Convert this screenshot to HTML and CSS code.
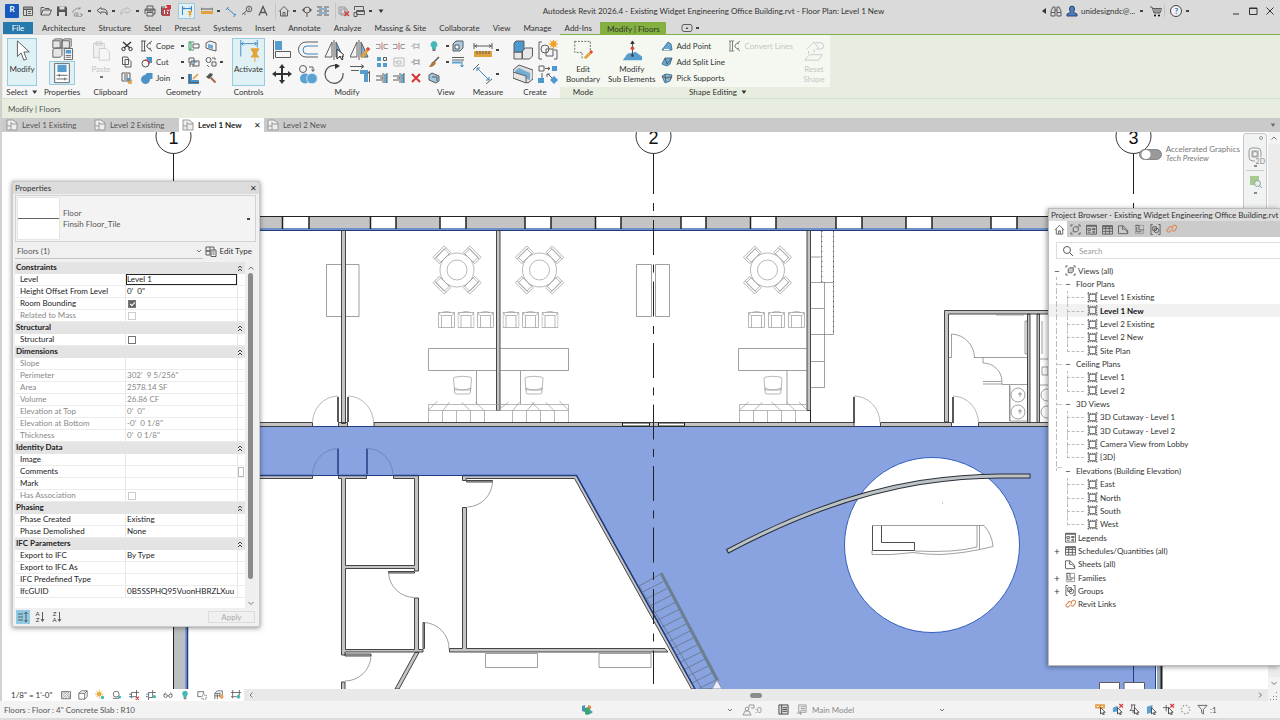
FILE: index.html
```html
<!DOCTYPE html>
<html lang="en">
<head>
<meta charset="utf-8">
<meta name="viewport" content="width=device-width, initial-scale=1">
<title>Autodesk Revit 2026.4</title>
<link rel="stylesheet" href="styles.css">
</head>
<body>
<svg class="sprite" aria-hidden="true">
  <symbol id="window" viewBox="0 0 12 12"><path class="k" d="M1.500 2h9v8.500h-9zM1.500 4.500h9M4.500 4.500v6M6 6.500h3M6 8.500h3"/><path class="k" d="M1.500 3h9"/></symbol>
  <symbol id="open" viewBox="0 0 12 12"><path class="k" d="M1 10V2.500h3l1 1h4V5M1 10l2-5h8.500L9.500 10z"/></symbol>
  <symbol id="save" viewBox="0 0 12 12"><path fill="#555" d="M1 1.500h9l1 1v8.500H1z"/><path fill="#ddd" d="M3.500 1.500h5v3h-5zM3 7h6v4H3z"/></symbol>
  <symbol id="sync" viewBox="0 0 12 12"><path class="k lt" d="M1 8a2 2 0 0 1 2-3 3 3 0 0 1 5-1M8 2v2H6M4 9a3 3 0 0 0 6 0M10 11V9H8M3 8h3v3H2z"/></symbol>
  <symbol id="undo" viewBox="0 0 12 12"><path class="k" d="M5 2.500L1 5.500l4 3V7h3q3 0 3 3 1-5-3-6H5z"/></symbol>
  <symbol id="redo" viewBox="0 0 12 12"><path class="k vl" d="M7 2.500l4 3-4 3V7H4q-3 0-3 3-1-5 3-6h3z"/></symbol>
  <symbol id="print" viewBox="0 0 12 12"><path class="k" d="M3 4V1h6v3M1 9V4h10v5H9M3 7.500h6V11H3zM3 6h6"/><path fill="#777" d="M1 4h10v2H1z"/></symbol>
  <symbol id="pdf" viewBox="0 0 12 12"><path fill="#b74b50" d="M2 3h8v8H2z"/><path fill="#eee" d="M4 5h1v4H4zM7 5h2v1H7zM7 7h1v2H7z"/><path fill="#d53338" d="M6 0h5v4H8z"/><path class="k" d="M1 2h4M1.500 2v8"/></symbol>
  <symbol id="temp" viewBox="0 0 12 12"><path class="k b" d="M1.500 1v9M10.500 1v5M1.500 3.500h9M3 2.500l-1 1 1 1M9 2.500l1 1-1 1"/><path fill="#e3a336" d="M7 6h4v1l-1 1v1l1 1H9.500V12h-1v-2H7l1-1V8L7 7z"/></symbol>
  <symbol id="ruler" viewBox="0 0 12 12"><path fill="#dfa13c" d="M0 6h12v3H0z"/><path class="k" d="M0 4h12M0 2.500v3M12 2.500v3"/></symbol>
  <symbol id="dim" viewBox="0 0 12 12"><path class="k b" d="M2 3l8 7M1 5l2.500-3M8.500 12l2.500-3"/></symbol>
  <symbol id="tag" viewBox="0 0 12 12"><circle class="k" cx="8" cy="4" r="2.800"/><path class="k" d="M5.500 6L1 9.500M4 10V8.500M8 2.500v3"/></symbol>
  <symbol id="text" viewBox="0 0 12 12"><path fill="none" stroke="#555" stroke-width="1.300" d="M2 10.500L6 1.500l4 9M3.500 7.500h5"/></symbol>
  <symbol id="home" viewBox="0 0 12 12"><path class="k" d="M1 6.500L6 1.500l5 5M2.500 5.500V11h7V5.500M5 11V7.500h2V11"/></symbol>
  <symbol id="section" viewBox="0 0 12 12"><circle class="k" cx="6" cy="5" r="3"/><path fill="#555" d="M1 5l2-2v4zM11 5L9 3v4zM5.500 8h1v4h-1z"/></symbol>
  <symbol id="thin" viewBox="0 0 12 12"><path class="k" d="M0 2h5M7 2h5M0 6h5M7 6h5M0 10h5M7 10h5"/><path class="k b" d="M2 4h8M2 8h8"/></symbol>
  <symbol id="closewin" viewBox="0 0 12 12"><path class="k lt" d="M1 2h6v7H1zM3 4h6v6H3z"/><path class="k r" d="M6.500 6.500l4.500 4.500M11 6.500L6.500 11"/></symbol>
  <symbol id="switch" viewBox="0 0 12 12"><path class="k" d="M1.500 5V1.500h9V5M3.500 5.500h8v4h-8zM1 7.500h3v4H1zM3.500 6.500h8"/></symbol>
  <symbol id="binoc" viewBox="0 0 12 12"><path class="k" d="M1 11V6l2-4h2v9zM7 11V2h2l2 4v5zM5 5h2M1 7.500h4M7 7.500h4"/></symbol>
  <symbol id="user" viewBox="0 0 12 12"><path fill="#527bbb" stroke="#26466f" d="M3.500 4a2.500 3 0 1 1 5 0c0 2-1 2.500-1 3.500L11 9v2H1V9l3.500-1.500c0-1-1-1.500-1-3.500z"/></symbol>
  <symbol id="cart" viewBox="0 0 12 12"><path class="k" d="M0 2h2l2 6h6l1.500-4.500H3M5 3.500V8M7 3.500V8M9 3.500V8"/><circle cx="5" cy="10.500" r="1"/><circle cx="9" cy="10.500" r="1"/></symbol>
  <symbol id="views" viewBox="0 0 12 12"><path class="k" d="M1 3V1h2M9 1h2v2M11 9v2H9M3 11H1V9"/><path fill="#ccc" class="k" d="M3.500 4.500l1.500-1.500h4v4L7.500 8.500h-4z"/></symbol>
  <symbol id="legend" viewBox="0 0 12 12"><path class="k" d="M.5 1.500h11v9.500H.5zM2 5h3v2H2zM7 5h3v1H7zM2 9h3M7 8h3M7 9.500h3"/><path fill="#666" d="M.5 1h11v2H.5z"/></symbol>
  <symbol id="table" viewBox="0 0 12 12"><path class="k" d="M.5 2h11v9H.5zM.5 5h11M.5 8h11M4 2v9M8 2v9"/><path fill="#666" d="M.5 1.500h11v2H.5z"/></symbol>
  <symbol id="sheet" viewBox="0 0 12 12"><path class="k" d="M.5 10V2h5l5 5v3.500h-10M5.500 2l-1 3.500 3 .5M8 6l3 4"/></symbol>
  <symbol id="family" viewBox="0 0 12 12"><path class="k lt" d="M1.500 1.500h9v9h-9z"/><path class="k" d="M5.500 1.500v5h5M1.500 1.500h4M3 3v5.500h5"/></symbol>
  <symbol id="group" viewBox="0 0 12 12"><path class="k" d="M3 .5H1v11h2M9 .5h2v11H9M3 3h4v4H3z"/><circle class="k" cx="7" cy="7" r="2.500"/></symbol>
  <symbol id="link" viewBox="0 0 12 12"><path fill="none" stroke="#dc8b5b" stroke-width="1.200" d="M5 7l-1 1.500a2 2 0 0 1-3-2L3 4.500a2 2 0 0 1 4 1M6 6a2 2 0 0 0 3.500 1L11 5a2 2 0 0 0-3-3L6.500 3.500"/></symbol>
  <symbol id="plan" viewBox="0 0 12 12"><path class="k" d="M2.500 2.500h7v7h-7z"/><path class="k" stroke-dasharray="1.500 1" d="M.5 1.500h11M.5 10.500h11M1.500 0v12M10.500 0v12"/></symbol>
  <symbol id="doc" viewBox="0 0 12 12"><path class="k lt" fill="#eee" d="M1 1h6l4 3v7H1zM1 7h4v4M5 5h6M5 3v4"/></symbol>
  <symbol id="cut" viewBox="0 0 12 12"><path fill="none" stroke="#333" stroke-width="1.400" d="M2 2l7 6M10 2L3 8"/><circle fill="none" stroke="#333" cx="2.500" cy="9" r="1.700"/><circle fill="none" stroke="#333" cx="9.500" cy="9" r="1.700"/></symbol>
  <symbol id="copy" viewBox="0 0 12 12"><path class="k" d="M1.500 1h5l1 2v5.500h-6zM4 3.500h4l2 2V11H4z"/></symbol>
  <symbol id="match" viewBox="0 0 12 12"><path class="k" d="M1 1h8v8H1zM3 3h4M3 5h4M3 7h3"/><path fill="#4c93ca" d="M6 6h3v3H6z"/><path class="k o" d="M7 11l4-3M8 11l3 0"/></symbol>
  <symbol id="cope" viewBox="0 0 12 12"><path class="k" d="M1 1v10M3.500 1v10M0 1h5M0 11h5M11 1L6 5v2l5 4M8 3l2 1M8 9l2-1"/></symbol>
  <symbol id="cutg" viewBox="0 0 12 12"><path fill="#4c93ca" d="M5 1h6v6H8z"/><circle fill="#f5f5f5" stroke="#555" cx="4.500" cy="7.500" r="3.500"/><path class="k r" d="M4 4a4 4 0 0 1 4 4"/></symbol>
  <symbol id="join" viewBox="0 0 12 12"><path fill="#4c93ca" d="M6 1h5.500v6H9a4.500 4.500 0 1 1-5-4z"/></symbol>
  <symbol id="geoA" viewBox="0 0 12 12"><path class="k g" d="M6 2H1v8h5M1 2l2 1v6l-2 1"/><path class="k" d="M5 4h6v4H5z"/></symbol>
  <symbol id="geoB" viewBox="0 0 12 12"><path class="k" d="M1 3l4-2 6 2v8l-4-1-6-2z"/><path fill="#70acd6" d="M3 4l5 1v4L3 8z"/></symbol>
  <symbol id="geoC" viewBox="0 0 12 12"><path class="k" d="M1 2h5v3H3v2H1zM6 5h5v5H6zM2 11V8h3v3"/><path class="k b" d="M3 6h6"/></symbol>
  <symbol id="geoD" viewBox="0 0 12 12"><circle class="k" cx="3.500" cy="4" r="2.500"/><path class="k" d="M7 6h4v4H7zM2 9l2 2M7 2h3v2"/></symbol>
  <symbol id="geoE" viewBox="0 0 12 12"><path fill="#4c93ca" d="M0 2h4v6h7v4H0z"/><path class="k" d="M1.500 2v8.500H11"/><path class="k o" d="M5 7l5-5"/></symbol>
  <symbol id="hammer" viewBox="0 0 12 12"><path fill="#555" d="M1 5l4-4 3 1-1 2-3 3z"/><path fill="none" stroke="#a86545" stroke-width="2" d="M5.500 5.500l5 5"/></symbol>
  <symbol id="align" viewBox="0 0 20 20"><path fill="#579ccf" d="M3 1h7v9H3z"/><path class="k" d="M1.500 0v19"/><path fill="#f7f7f7" class="k" d="M3.500 11.500h15v6h-15z"/></symbol>
  <symbol id="offset" viewBox="0 0 20 20"><path class="k" d="M20 2H8a7.500 7.500 0 0 0 0 15h12"/><path class="k b" d="M20 6H9a4 4 0 0 0 0 8h11"/></symbol>
  <symbol id="mirrorA" viewBox="0 0 20 20"><path class="k" d="M8 2v15H1zM10 0v20"/><path fill="#78b1d7" class="k" d="M12 2v15h7z"/><path fill="#fff" stroke="#333" d="M13 9v10l3-3 2 4 1-1-1-3h3z"/></symbol>
  <symbol id="mirrorB" viewBox="0 0 20 20"><path class="k" d="M7 2v15H0zM9 0v20"/><path fill="#78b1d7" class="k" d="M11 2v15h7z"/><path fill="none" stroke="#e5a23a" stroke-width="3" d="M19 8l-7 9"/><path stroke="#d44" stroke-width="3" d="M19 8l-2 2"/></symbol>
  <symbol id="move" viewBox="0 0 20 20"><path fill="#333" d="M10 0l3 4H7zM10 20l3-4H7zM0 10l4-3v6zM20 10l-4-3v6zM9 4h2v12H9zM4 9h12v2H4z"/></symbol>
  <symbol id="copyM" viewBox="0 0 20 20"><circle class="k" cx="5" cy="5" r="3.500"/><path class="k" d="M11 3h4v4M13.500 5.500L15 7.500l1.500-2"/><circle fill="#5aa2d3" cx="7" cy="14.500" r="5"/><circle fill="#5aa2d3" stroke="#d8e9f3" cx="14" cy="14.500" r="5.300"/></symbol>
  <symbol id="rotate" viewBox="0 0 20 20"><path fill="none" stroke="#555" stroke-width="1.200" d="M12 1.500A9 9 0 1 0 19 9"/><path fill="#333" d="M11-1l5 3-5 3z"/></symbol>
  <symbol id="trim" viewBox="0 0 20 20"><path fill="#579ccf" d="M10 6h8v12h-4v-8h-4z"/><path class="k" d="M0 2.500h13M1 6.500h8M11 .5l3 2-3 2M19.500 18V8M17.500 10l2-3 2 3"/></symbol>
  <symbol id="split" viewBox="0 0 12 12"><path class="k lt" d="M0 4.500h4v4H0M12 4.500H8v4h4"/><path stroke="#d8676a" d="M6 2.500v7.500"/></symbol>
  <symbol id="pin" viewBox="0 0 12 12"><path class="k lt" d="M1 6h3M4 3v6M4 4l5 1M4 8l5-1M9 3v6"/></symbol>
  <symbol id="array" viewBox="0 0 12 12"><path fill="#579ccf" d="M1 1h4v4H1zM7 7h4v4H7zM1 7h4v4H1z"/><path class="k" d="M7.500 1.500h3v3h-3z"/></symbol>
  <symbol id="scale" viewBox="0 0 12 12"><path class="k vl" d="M1 2h10v8H1zM4 5h4v3H4zM1 6h3"/></symbol>
  <symbol id="ext" viewBox="0 0 12 12"><path fill="#70a9cf" d="M8 2h3v9H8z"/><path class="k" d="M0 4h6M0 8h6M7 1v10M11 1v10M4 6h3"/></symbol>
  <symbol id="del" viewBox="0 0 12 12"><path fill="none" stroke="#d93438" stroke-width="2" d="M2 2l8 8M10 2l-8 8"/></symbol>
  <symbol id="bulb" viewBox="0 0 12 12"><path fill="#45b9b6" d="M6 1a3.500 3.500 0 0 1 2 6.300V9H4V7.300A3.500 3.500 0 0 1 6 1z"/><path fill="#777" d="M4.500 9h3v2h-3z"/></symbol>
  <symbol id="brush" viewBox="0 0 12 12"><path stroke="#555" stroke-width="1.500" d="M11 1L6 6"/><path fill="#b5763d" d="M6 5l2 2c-2 4-5 4-7 4 2-2 2-5 5-6z"/></symbol>
  <symbol id="box" viewBox="0 0 12 12"><path fill="#a9cde4" class="k" d="M1 4l3-3h7v7l-3 3H1z"/><path fill="#f7f7f7" class="k" d="M3 5h4v4H3z"/></symbol>
  <symbol id="lines" viewBox="0 0 12 12"><path class="k" d="M0 1.500h12M0 4h12" /><path stroke="#5aa2d3" stroke-width="2" d="M0 6.500h9"/><path class="k b" d="M10 5v6M8.500 9l1.500 2 1.500-2"/></symbol>
  <symbol id="slab" viewBox="0 0 12 12"><path fill="#9fc6de" class="k" d="M1 3l3-2 7 3v5l-3 2-7-3z"/><path class="k" d="M4 5h5v4"/></symbol>
  <symbol id="measure" viewBox="0 0 20 20"><path fill="#dfa13c" d="M1 11h18v6H1z"/><path class="k" d="M1 3v6M19 3v6M1 6h18M4 4.500L2 6l2 1.500M16 4.500L18 6l-2 1.500M4 11v3M7 11v3M10 11v3M13 11v3M16 11v3"/></symbol>
  <symbol id="aligned" viewBox="0 0 20 20"><path class="k b" d="M4 4l12 12M4 7V4h3M16 13v3h-3"/><path class="k" d="M0 6l6-6M13 20l6-5"/></symbol>
  <symbol id="assembly" viewBox="0 0 20 20"><path fill="#e8e8e8" class="k" d="M9.500 10l3-2h7v8l-3 3h-7zM1 12h8v7H1z"/><path fill="#4c99ce" class="k" d="M1 3l2-2h8v8L9 12H1z"/></symbol>
  <symbol id="newgroup" viewBox="0 0 20 20"><path class="k" d="M4 2H1v17h3M16 10h3v9h-3M8 9h7v7H8z"/><circle class="k" cx="7" cy="9" r="4"/><circle fill="#f1a329" cx="15.500" cy="4" r="3"/><path stroke="#f1a329" d="M15.500-1v10M10.500 4h10M12 .5l7 7M19 .5l-7 7"/></symbol>
  <symbol id="parts" viewBox="0 0 20 20"><path fill="#ddd" class="k" d="M0 6l6-5 14 5v9l-5 4L0 14z"/><path fill="#73add4" d="M2 7l4-3 11 5v7L2 11z"/><path fill="#e6e6e6" class="k" d="M0 8l13 4v7L0 14z"/></symbol>
  <symbol id="similar" viewBox="0 0 20 20"><path class="k" d="M1 2h5v5H1zM7 4.500h5M10 3l2 1.500-2 1.500M4 9v5M10 10l5 5M12 10h-3v3"/><path fill="#4c99ce" d="M14 2h5v5h-5zM0 14h6v5H0zM16 12l4 4-4 4-4-4z"/></symbol>
  <symbol id="addpt" viewBox="0 0 12 12"><path fill="#67a8d2" stroke="#477a9b" d="M1 10L7 2l3 2 1 6z"/><path fill="#fff" d="M3 9h5v1H3z"/></symbol>
  <symbol id="addln" viewBox="0 0 12 12"><path fill="#67a8d2" stroke="#477a9b" d="M1 8l3-6h7L9 8l-3 2z"/><path class="k" d="M4 2l2 6 5-6"/></symbol>
  <symbol id="pick" viewBox="0 0 12 12"><path fill="#8bbcd8" stroke="#477a9b" d="M1 4l4-2 6 1-2 6-5 2z"/><path class="k" d="M1 5l7 1M4 2l1 8M7 5h4l-2 3"/></symbol>
  <symbol id="sun" viewBox="0 0 12 12"><circle fill="#e8aa35" cx="5" cy="5" r="2.500"/><path stroke="#e8aa35" d="M5 0v10M0 5h10M1.500 1.500l7 7M8.500 1.500l-7 7"/><circle fill="#45b9b6" cx="9" cy="9" r="2"/></symbol>
  <symbol id="shadow" viewBox="0 0 12 12"><circle class="k" cx="5" cy="5" r="3.500"/><path class="k" d="M1 10h7"/><circle fill="#45b9b6" cx="9" cy="8.500" r="2"/></symbol>
  <symbol id="crop" viewBox="0 0 12 12"><path class="k" d="M3 10V3h9M0 5h3M9 0v8H1"/><path class="k b" d="M0 8h4"/><path class="k r" d="M8 8l4 4M12 8l-4 4"/></symbol>
  <symbol id="cropv" viewBox="0 0 12 12"><path class="k" d="M0 8h3V3h9M8 0v9H3v3"/><path class="k b" d="M0 5h4"/><circle fill="#45b9b6" cx="10" cy="8" r="2"/></symbol>
  <symbol id="glasses" viewBox="0 0 12 12"><circle class="k" cx="3" cy="7" r="2"/><circle class="k" cx="9" cy="7" r="2"/><path class="k" d="M1 6l2-3M11 6L9 3M5 7h2"/></symbol>
  <symbol id="hatch" viewBox="0 0 12 12"><path class="k" d="M.5 2h11v8.500H.5z"/><path stroke="#888" stroke-width=".7" d="M1 5l3-3M1 8l6-6M2 10l8-8M5 10l6-6M8 10l3-3M1 7l3 3M1 4l6 6M3 2l8 8M6 2l5 5"/></symbol>
  <symbol id="cube" viewBox="0 0 12 12"><path class="k" d="M1 4l3-3h7v7l-3 3H1zM1 4h7v7M8 4l3-3"/></symbol>
  <symbol id="tprops" viewBox="0 0 12 12"><path class="k" d="M1 2h7v3M1 2v6h4"/><path class="k" stroke-dasharray="1.500 1" d="M6 6h5v5H6z"/></symbol>
  <symbol id="analy" viewBox="0 0 12 12"><path class="k" d="M1 4l3-3h6v6M1 4v7M4 4v7M7 4v4M1 7h8M1 4h7"/><circle fill="#e8a158" cx="9" cy="8" r="2.500"/></symbol>
  <symbol id="constr" viewBox="0 0 12 12"><path class="k" d="M2 0v10M10 0v6M0 3h12M0 8h7"/><circle fill="#45b9b6" cx="9" cy="8" r="2.200"/></symbol>
  <symbol id="selcur" viewBox="0 0 12 12"><path fill="#fff" stroke="#444" d="M6 4v7l1.500-1.500L9 12l1-.5L9 9h2z"/></symbol>
  <symbol id="filter" viewBox="0 0 12 12"><path class="k" d="M1 1.500h10L7 6v5L5 9.500V6z"/></symbol>
  <symbol id="fold" viewBox="0 0 8 8"><path fill="none" stroke="#444" d="M2 4l2-2 2 2M2 7l2-2 2 2"/></symbol>
  <symbol id="down" viewBox="0 0 8 8"><path fill="none" stroke="#777" d="M2 3l2 2 2-2"/></symbol>
  <symbol id="chair" viewBox="0 0 17 17"><path class="d" d="M.5 1.500h16v15H.5zM3.500 4.500h10v12M3.500 4.500v12M1 1.500l1.500 3M16 1.500l-1.500 3M4 1.500q4.500-2.500 9 0"/></symbol>
</svg>

<header class="titlebar">
  <div class="quick" role="toolbar" aria-label="Quick access">
    <span class="logo">R</span>
    <button class="qi" aria-label="Home window"><svg><use href="#window"/></svg></button>
    <button class="qi s2" aria-label="Open"><svg><use href="#open"/></svg></button>
    <button class="qi" aria-label="Save"><svg><use href="#save"/></svg></button>
    <button class="qi" aria-label="Synchronize"><svg><use href="#sync"/></svg></button>
    <i class="caret"></i>
    <button class="qi s2" aria-label="Undo"><svg><use href="#undo"/></svg></button>
    <i class="caret"></i>
    <button class="qi s2" aria-label="Redo"><svg><use href="#redo"/></svg></button>
    <i class="caret"></i>
    <button class="qi s2" aria-label="Print"><svg><use href="#print"/></svg></button>
    <button class="qi" aria-label="Export PDF"><svg><use href="#pdf"/></svg></button>
    <button class="qi on s4" aria-label="Activate dimensions"><svg><use href="#temp"/></svg></button>
    <button class="qi s4" aria-label="Measure"><svg><use href="#ruler"/></svg></button>
    <i class="caret"></i>
    <button class="qi s2" aria-label="Aligned dimension"><svg><use href="#dim"/></svg></button>
    <button class="qi" aria-label="Tag"><svg><use href="#tag"/></svg></button>
    <button class="qi" aria-label="Text"><svg><use href="#text"/></svg></button>
    <button class="qi bar s4" aria-label="3D view"><svg><use href="#home"/></svg></button>
    <i class="caret"></i>
    <button class="qi s2" aria-label="Section"><svg><use href="#section"/></svg></button>
    <button class="qi" aria-label="Thin lines"><svg><use href="#thin"/></svg></button>
    <button class="qi bar s4" aria-label="Close inactive"><svg><use href="#closewin"/></svg></button>
    <button class="qi" aria-label="Switch windows"><svg><use href="#switch"/></svg></button>
    <i class="caret"></i>
    <i class="caret tri"></i>
  </div>
  <h1>Autodesk Revit 2026.4 - Existing Widget Engineering Office Building.rvt - Floor Plan: Level 1 New</h1>
  <div class="account">
    <i class="caret left"></i>
    <button class="qi" aria-label="Search"><svg><use href="#binoc"/></svg></button>
    <button class="user"><svg><use href="#user"/></svg>unidesigndc@...<i class="caret"></i></button>
    <button class="qi" aria-label="Store"><svg><use href="#cart"/></svg></button>
    <button class="help bar" aria-label="Help"><span>?</span></button>
    <i class="caret"></i>
    <button class="win first" aria-label="Minimize"><svg viewBox="0 0 10 10"><path d="M2 8h6"/></svg></button>
    <button class="win" aria-label="Maximize"><svg viewBox="0 0 10 10"><path d="M1.500 2h7.500v6.500H1.500zM1.500 2.500H9"/></svg></button>
    <button class="win" aria-label="Close"><svg viewBox="0 0 10 10"><path d="M1.500 1.500l7 7M8.500 1.500l-7 7"/></svg></button>
  </div>
</header>

<nav class="tabs" aria-label="Ribbon tabs">
  <button class="file">File</button>
  <button>Architecture</button><button>Structure</button><button>Steel</button><button>Precast</button><button>Systems</button><button>Insert</button><button>Annotate</button><button>Analyze</button><button>Massing &amp; Site</button><button>Collaborate</button><button>View</button><button>Manage</button><button>Add-Ins</button>
  <button class="current">Modify | Floors</button>
  <button class="mini" aria-label="Ribbon display"><svg viewBox="0 0 12 8"><path class="k" d="M3 .5h6a2 2 0 0 1 2 2v3a2 2 0 0 1-2 2H3a2 2 0 0 1-2-2v-3a2 2 0 0 1 2-2z"/><path fill="#444" d="M6 3l1.500 2h-3z"/></svg><i class="caret"></i></button>
</nav>

<div class="ribbon">
  <section class="panel w38">
    <div class="tools"><button class="big sel"><svg viewBox="0 0 24 24"><path fill="#fff" stroke="#555" d="M7 1v17l4-4 3 8 3-1-3-8h6z"/></svg>Modify</button></div>
    <h2>Select <i class="caret tri"></i></h2>
  </section>
  <section class="panel w42">
    <div class="tools stack">
      <button class="mid" aria-label="Type properties"><svg viewBox="0 0 24 24"><path fill="#e6e6e6" class="k" d="M2 3l2-2h8v8l-2 2H2zM12 3l2-2h8v8l-2 2h-8zM2 13l2-2h8v8l-2 2H2zM2 3h8v8M12 3h8v8"/><path fill="#fff" class="k" d="M14.500 11.500h9v12h-9z"/><path fill="#579ccf" d="M16 13h6v4h-6z"/><path class="k" d="M16 19h6M16 21h6"/></svg></button>
      <button class="mid sel" aria-label="Properties"><svg viewBox="0 0 24 24"><path fill="#fff" class="k" d="M4 1.500h16v21H4z"/><path fill="#579ccf" d="M7 3h10v8H7z"/><path class="k" d="M6 14.500h12M6 18.500h12M9 13v3M15 17v3"/></svg></button>
    </div>
    <h2>Properties</h2>
  </section>
  <section class="panel w55">
    <div class="tools clip">
      <button class="big off"><svg viewBox="0 0 24 24"><path fill="#eee" stroke="#b8b8b8" d="M3 3h13v17H3zM6 1h7v4H6z"/><path fill="#f7f7f7" stroke="#b8b8b8" d="M10 9h8l4 4v10H10z"/></svg>Paste<i class="caret"></i></button>
      <div class="col"><button class="sm" aria-label="Cut"><svg><use href="#cut"/></svg></button><button class="sm" aria-label="Copy"><svg><use href="#copy"/></svg></button><button class="sm" aria-label="Match type"><svg><use href="#match"/></svg></button></div>
    </div>
    <h2>Clipboard</h2>
  </section>
  <section class="panel w91">
    <div class="tools geo">
      <button class="row"><svg><use href="#cope"/></svg>Cope<i class="caret"></i></button><button class="sm" aria-label="Wall opening"><svg><use href="#geoA"/></svg></button><button class="sm" aria-label="Face"><svg><use href="#geoB"/></svg></button><i></i>
      <button class="row"><svg><use href="#cutg"/></svg>Cut<i class="caret"></i></button><button class="sm" aria-label="Beam joins"><svg><use href="#geoC"/></svg></button><button class="sm" aria-label="Wall joins"><svg><use href="#geoD"/></svg></button><i class="caret"></i>
      <button class="row"><svg><use href="#join"/></svg>Join<i class="caret"></i></button><button class="sm" aria-label="Paint"><svg><use href="#geoE"/></svg></button><button class="sm" aria-label="Demolish"><svg><use href="#hammer"/></svg></button><i></i>
    </div>
    <h2>Geometry</h2>
  </section>
  <section class="panel w39">
    <div class="tools"><button class="big sel"><svg viewBox="0 0 24 24"><path class="k b" d="M3 0v18M21 0v8M3 4h18M6 2L4 4l2 2M18 2l2 2-2 2"/><path fill="#e3a336" d="M14 9h9v2l-2 2v3l2 2v1h-4v5h-1v-5h-4v-1l2-2v-3l-2-2z"/></svg>Activate</button></div>
    <h2>Controls</h2>
  </section>
  <section class="panel w158">
    <div class="tools mod">
      <div class="g4">
        <button aria-label="Align"><svg><use href="#align"/></svg></button><button aria-label="Offset"><svg><use href="#offset"/></svg></button><button aria-label="Mirror pick axis"><svg><use href="#mirrorA"/></svg></button><button aria-label="Mirror draw axis"><svg><use href="#mirrorB"/></svg></button>
        <button aria-label="Move"><svg><use href="#move"/></svg></button><button aria-label="Copy elements"><svg><use href="#copyM"/></svg></button><button aria-label="Rotate"><svg><use href="#rotate"/></svg></button><button aria-label="Trim"><svg><use href="#trim"/></svg></button>
      </div>
      <div class="g3">
        <button class="sm" aria-label="Split"><svg><use href="#split"/></svg></button><button class="sm" aria-label="Split gap"><svg><use href="#split"/></svg></button><button class="sm off" aria-label="Unpin"><svg><use href="#pin"/></svg></button>
        <button class="sm" aria-label="Array"><svg><use href="#array"/></svg></button><button class="sm" aria-label="Scale"><svg><use href="#scale"/></svg></button><button class="sm" aria-label="Pin"><svg><use href="#pin"/></svg></button>
        <button class="sm" aria-label="Extend one"><svg><use href="#ext"/></svg></button><button class="sm" aria-label="Extend many"><svg><use href="#ext"/></svg></button><button class="sm" aria-label="Delete"><svg><use href="#del"/></svg></button>
      </div>
    </div>
    <h2>Modify</h2>
  </section>
  <section class="panel w40">
    <div class="tools view">
      <button class="sm" aria-label="Hide"><svg><use href="#bulb"/></svg></button><i class="caret"></i><button class="sm" aria-label="Selection box"><svg><use href="#box"/></svg></button>
      <button class="sm" aria-label="Override"><svg><use href="#brush"/></svg></button><i class="caret"></i><button class="sm" aria-label="Linework"><svg><use href="#lines"/></svg></button>
      <button class="sm" aria-label="Displace"><svg><use href="#slab"/></svg></button><i></i><i></i>
    </div>
    <h2>View</h2>
  </section>
  <section class="panel w44">
    <div class="tools pair">
      <button aria-label="Measure distance"><svg><use href="#measure"/></svg></button><i class="caret"></i>
      <button aria-label="Dimension"><svg><use href="#aligned"/></svg></button><i class="caret"></i>
    </div>
    <h2>Measure</h2>
  </section>
  <section class="panel w50">
    <div class="tools quad">
      <button aria-label="Create assembly"><svg><use href="#assembly"/></svg></button><button aria-label="Create group"><svg><use href="#newgroup"/></svg></button>
      <button aria-label="Create parts"><svg><use href="#parts"/></svg></button><button aria-label="Create similar"><svg><use href="#similar"/></svg></button>
    </div>
    <h2>Create</h2>
  </section>
  <section class="panel ctx w46">
    <div class="tools"><button class="big"><svg viewBox="0 0 24 24"><path class="k" stroke-dasharray="2 1.500" d="M3 1.500h17v14M3 1.500v12h8v8"/><path fill="none" stroke="#e5a23a" stroke-width="3" d="M21 13l-7 7"/><path stroke="#d44" stroke-width="3" d="M22 12l-2 2"/></svg>Edit<br>Boundary</button></div>
    <h2>Mode</h2>
  </section>
  <section class="panel ctx w224">
    <div class="tools shape">
      <button class="big"><svg viewBox="0 0 24 24"><path fill="#579ccf" d="M2 22l5-7 9-2 7 5v4z"/><path stroke="#444" d="M12.500 3v14M10.500 4l2-3 2 3"/><circle fill="#d44" cx="12.500" cy="9" r="2"/><circle fill="#444" cx="12.500" cy="17" r="1.500"/></svg>Modify<br>Sub Elements</button>
      <div class="col wide"><button class="row"><svg><use href="#addpt"/></svg>Add Point</button><button class="row"><svg><use href="#addln"/></svg>Add Split Line</button><button class="row"><svg><use href="#pick"/></svg>Pick Supports</button></div>
      <button class="row off top"><svg><use href="#cope"/></svg>Convert Lines</button>
      <button class="big off tail"><svg viewBox="0 0 24 24"><path stroke="#b9b9b9" fill="none" d="M2 22l5-6h14l-4 6zM4 10l8-8 4 6M14 3h5a3 3 0 0 1 0 7h-4l2-2M6 12v3M12 10v4"/></svg>Reset<br>Shape</button>
    </div>
    <h2>Shape Editing <i class="caret tri"></i></h2>
  </section>
</div>

<div class="options">Modify | Floors</div>

<nav class="doctabs" aria-label="Open views">
  <button><svg><use href="#doc"/></svg>Level 1 Existing</button>
  <button><svg><use href="#doc"/></svg>Level 2 Existing</button>
  <button class="current"><svg><use href="#doc"/></svg>Level 1 New<span>✕</span></button>
  <button><svg><use href="#doc"/></svg>Level 2 New</button>
  <i class="caret tri end"></i>
</nav>

<main class="work">
  <svg class="plan" viewBox="2 132 1278 557" preserveAspectRatio="xMidYMin slice" role="img" aria-label="Floor plan, Level 1 New">
    <defs>
      <g id="dining">
        <g transform="rotate(45)"><path class="d" d="M-6-17v-7h12v7zM-8-17v-9h16v9zM-8-23.500h16"/></g>
        <g transform="rotate(135)"><path class="d" d="M-6-17v-7h12v7zM-8-17v-9h16v9zM-8-23.500h16"/></g>
        <g transform="rotate(225)"><path class="d" d="M-6-17v-7h12v7zM-8-17v-9h16v9zM-8-23.500h16"/></g>
        <g transform="rotate(315)"><path class="d" d="M-6-17v-7h12v7zM-8-17v-9h16v9zM-8-23.500h16"/></g>
        <circle class="d wf" r="17"/><circle class="d" r="10"/>
      </g>
      <g id="office"><path class="d" d="M0 2q0-2 2-2 7-1.500 14 0 2 0 2 2l-1 11H1zM1 11v4q0 2 2 2h12q2 0 2-2v-4M1 11q8 4 16 0"/></g>
    </defs>
    <path fill="#88a3e0" d="M259 426H1156V689H721L695 689 576 475H259z"/>
    <path class="e" d="M259 475.500H576.500L695 689M259 426.500h800"/>
    <path fill="#c4c4c4" d="M259 217h800v11H259z"/>
    <path fill="#fff" d="M283 217h26v11h-26zM371 217h25v11h-25zM440 217h26v11h-26zM525 217h26v11h-26zM596 217h25v11h-25zM681 217h25v11h-25zM751 217h25v11h-25zM836 217h26v11h-26zM906 217h26v11h-26zM991 217h26v11h-26z"/>
    <path fill="#6f8fc6" d="M259 228h800v2H259z"/>
    <path class="w" d="M259 216.500h800"/><path class="e" d="M259 230.500h800"/>
    <path class="w" stroke-width="1.500" d="M282.500 217v12M309 217v12M370.500 217v12M396 217v12M440 217v12M466 217v12M525 217v12M551 217v12M595.500 217v12M621 217v12M681 217v12M706 217v12M750.500 217v12M776 217v12M836 217v12M862 217v12M906 217v12M932 217v12M991 217v12M1017 217v12"/>
    <path class="d dk" d="M326.500 264.500h32.500v52h-32.500zM636.500 264.500h15v52h-15zM655.500 264.500h14v52h-14z"/>
    <path class="gw" d="M341.500 230.500h4v193h-4zM496.500 230.500h3.500v180h-3.500zM807 230.500h3.500v180H807zM259 422.500h53.500v4H259zM338.500 422.500h9v4h-9zM374 422.500h480v4H374zM880.500 422.500h71v4h-71zM978.500 422.500h80v4h-80zM944.500 310.500h110v3.500h-106v108h-4zM1027.500 314h2.500v108.500h-2.500zM1037 314h2.500v108.500H1037z"/>
    <path class="w" d="M810.500 410v13M622.500 423h27v3h-27zM658.500 423h26v3h-26z" fill="#fff"/>
    <path class="w" stroke-width="1.500" d="M338 397v25M348 397v25M854 397v26M953 397v26"/>
    <path class="d" d="M338 396a26 27 0 0 0-25.500 27M348 396a26 27 0 0 1 25.500 27M854 396a26 27 0 0 1 26 27M953 396a26 27 0 0 1 25.500 27"/>
    <use href="#dining" x="457" y="270"/><use href="#dining" x="539.500" y="270"/><use href="#dining" x="767.500" y="270"/>
    <use href="#chair" x="438" y="311" width="17" height="17"/><use href="#chair" x="457.500" y="311" width="17" height="17"/><use href="#chair" x="477" y="311" width="17" height="17"/>
    <use href="#chair" x="502.500" y="311" width="17" height="17"/><use href="#chair" x="522" y="311" width="17" height="17"/><use href="#chair" x="541.500" y="311" width="17" height="17"/>
    <use href="#chair" x="748" y="311" width="17" height="17"/><use href="#chair" x="768" y="311" width="17" height="17"/><use href="#chair" x="788" y="311" width="17" height="17"/>
    <path class="d dk" d="M496 348.500h-67.500v22H496M500 348.500h68.500v22H500M807 348.500h-68.500v22H807M476.500 371v33M520.500 371v33M787 371v33"/>
    <use href="#office" x="453.500" y="377"/><use href="#office" x="525" y="377"/><use href="#office" x="764" y="377"/>
    <path class="d" d="M428.500 422v-17.500h140V422M428.500 410.500h140M442.500 422v-11l7-9M456.500 422v-11M470.500 422v-11l-9-9M484.500 422v-11l-9-9M498.500 410l10-8M512.500 422v-11l7-9M526.500 422v-11l8-9M540.500 422v-11l-9-9M554.500 422v-11l-9-9M568.500 410l-9-9M428.500 410l9-9"/>
    <path class="d" d="M739.500 422v-17.500H807M739.500 410.500H807M753.500 422v-11l9-9M767.500 422v-11M781.500 422v-11l-10-9M795.500 422v-11l-9-9M739.500 410l9-8M807 410l-8-8"/>
    <path class="d dk" d="M810.500 257h10M821.500 231v51M810.500 282.500h23M833.500 334.500V231M824.500 282v105.500h-14M810.500 308.500h14M810.500 334.500h23M810.500 361.500h14"/>
    <path class="w" stroke-width=".6" stroke-dasharray="1 4" d="M833.500 231v103M822 231v51"/>
    <path class="d dk" d="M949 357.500h2M974 357.500h53M983 357v6M983 381.500h19v2.500h-19M1002 384.500h25M951.500 334v24M996 315h28M1025 321h2v33h-2zM1042 321v33"/>
    <path class="d dk" d="M951.500 334a24 24 0 0 1 23 24M983 363a19 19 0 0 1 19 18M1009.500 385v36h18M1010 421V386"/>
    <circle class="d dk" cx="1018" cy="395" r="7"/><circle class="d dk" cx="1018" cy="412" r="7"/><circle class="d dk" cx="1047" cy="395" r="6"/><circle class="d dk" cx="1047" cy="412" r="6"/><path class="d dk" d="M1018 394h4M1020 392v5M1018 411h4M1020 409v5M1040 359h8M1040 385h8M1042 367h6v8h-6z"/>
    <path class="e" stroke-width="1.500" d="M338 448.500v26M367 448.500v26"/>
    <path fill="none" stroke="#7087b8" d="M338 448.500a26 27 0 0 0-25.500 27M367 448.500a26 27 0 0 1 26 27"/>
    <path class="gw" d="M259 475.500h53.500v3H259zM341.500 478.500H338.500v-3h28v3H345.500V565.500H414.500V478.500H393.500v-3h25v95.500h-4v-2.500H345.500V649.500H414.500V598h4V649.500h4.500v2.500H345v3h-3.500z"/>
    <path class="gw" d="M462.500 480.500v-5H576.500L695 689h-3.500L574.500 478.500H466v2zM462.500 507.500h4V648.500H665l3 3.500H449.500v-3.500h13zM341.500 682h3.500v8h-3.500zM415 652.500h4l-20 36.500h-4z"/>
    <path class="e" stroke-width="1.500" d="M259 475.500h53M338.500 475.500h28M393.500 475.500h25M462.500 475.500h114L695 689"/>
    <path class="gw" d="M466.500 480.500h26v1.500h-26zM388.500 571.500h26v1.500h-26zM423 622.500h1.500v26h-1.500zM345 654h26v2h-26z"/>
    <path class="d dk" d="M492.500 481a26 26 0 0 1-25 26M388.500 572a26 26 0 0 0 26 25.500M424 622.500a26 26 0 0 1 25 27M371 656a26 26 0 0 1-26 25M485.500 653.500h52v14h-52zM599 653.500h52v14h-52z"/>
    <path class="stair" d="M639 586l22-12L720 688 702 689zM642.500 592l21-10.500M646 599l21-10.500M650 606l21-10.500M654 613l21-10.500M658 620l21-10.500M662 627l21-10.500M666 634l20-10M670 641l20-10M673 648l20-10M677 655l20-10M681 662l20-10M685 669l20-10M688 676l20-10M692 683l20-10M698 689l18-9"/>
    <path fill="none" stroke="#6d7f91" stroke-width="3" d="M661 573l57 108"/>
    <path fill="#eef" stroke="#8a93a0" d="M712 689l5-9 5 9z"/>
    <circle cx="932" cy="545" r="87.500" fill="#fff" stroke="#3560c0"/>
    <path fill="none" stroke="#2b2f38" stroke-width="5" d="M727 551.500C790 518 855 493 920 482.500 950 478 975 476 1000 476H1030.500"/>
    <path fill="none" stroke="#bcc3c6" stroke-width="3" d="M728 551C790 518 855 493 920 482.500 950 478 975 476 1000 476H1029.500"/>
    <path class="w" stroke-width=".8" d="M872.500 525.500v25h42v-8h-33v-17"/>
    <path class="d dk" d="M872.500 525.500H984q8 9 9 21-28 7-53 8-15 0-27-2-22 3-41 2v-4M979.500 525.500v24M977 526v21q-22 6-62 4"/><path stroke="#999" d="M942 503h1"/>
    <path class="w" d="M173.500 153v60M1133.500 153v41M1133.500 203v8M653.500 153v41"/>
    <path class="w" stroke-dasharray="8 9 35 9.500" d="M653.500 203V684"/>
    <g class="bubble"><circle cx="173.500" cy="136" r="17.500"/><circle cx="653.500" cy="136" r="17.500"/><circle cx="1133.500" cy="136" r="17.500"/>
      <text x="173.500" y="144">1</text><text x="653.500" y="144">2</text><text x="1133.500" y="144">3</text></g>
    <path fill="#bcbfc0" d="M174 600h11v89h-11z"/><path fill="#7f99cf" d="M185 600h2v89h-2z"/><path class="w" d="M173.500 600v89"/><path class="e" stroke-width="1.500" d="M187.500 600v89"/>
    <path class="e" d="M1133.500 660v22M1155.500 660v29"/><path fill="#9ab" d="M1157 660h4v29h-4z"/><path class="w" stroke-width="2" d="M1161.500 660v29"/>
    <path fill="#fff" class="k" d="M1099.500 682.500h20v7h-20zM1124 682.500h20.500v7H1124z"/>
  </svg>

  <label class="accel"><input type="checkbox"><span>Accelerated Graphics<em>Tech Preview</em></span></label>
  <div class="navbar"><i class="dot"></i><button aria-label="Steering wheel 2D"><svg viewBox="0 0 16 16"><path class="k lt" d="M2 4a3 3 0 0 1 3-3h5a4 4 0 0 1 4 4v5M2 4v6a4 4 0 0 0 4 4h2M5 4h6v6H5z"/><circle class="k lt" cx="8" cy="7" r="2.500"/></svg><small>2D</small></button><i class="caret"></i><hr><button aria-label="Zoom region"><svg viewBox="0 0 16 16"><path fill="#a7ca91" d="M3 2h9v9H3z"/><circle cx="10.500" cy="9.500" r="3" fill="#e8f0ec" stroke="#8ba3a5"/><path stroke="#8ba3a5" d="M12.500 11.500L15 14"/></svg></button><i class="caret"></i></div>
  <div class="vscroll"><button aria-label="Scroll up"><svg viewBox="0 0 8 8"><path d="M1.500 5.500L4 3l2.500 2.500"/></svg></button><button aria-label="Scroll down"><svg viewBox="0 0 8 8"><path d="M1.500 3L4 5.500 6.500 3"/></svg></button></div>

  <aside class="props" aria-label="Properties">
    <header>Properties<button aria-label="Close">✕</button></header>
    <button class="type"><span class="thumb"></span><span>Floor<br>Finsih Floor_Tile</span><i class="caret"></i></button>
    <div class="pick">
      <label><select aria-label="Category"><option>Floors (1)</option></select><svg class="chev"><use href="#down"/></svg></label>
      <button><svg viewBox="0 0 12 12"><path class="k" d="M1 2h4v4H1zM5 2h4v3M1 6h4v4H1zM6 5h5v6.500H6zM7.500 7h2M7.500 9h2"/></svg>Edit Type</button>
    </div>
    <div class="sheet">
      <table>
        <colgroup><col class="c1"><col class="c2"><col class="c3"></colgroup>
        <tbody>
        <tr class="h"><th colspan="2">Constraints</th><td><svg><use href="#fold"/></svg></td></tr>
        <tr><th><label for="lv">Level</label></th><td><input id="lv" class="tx" value="Level 1"></td><td></td></tr>
        <tr><th>Height Offset From Level</th><td>0'&nbsp; 0"</td><td></td></tr>
        <tr><th><label for="rb">Room Bounding</label></th><td><input id="rb" type="checkbox" checked></td><td></td></tr>
        <tr class="dim"><th><label for="rm">Related to Mass</label></th><td><input id="rm" type="checkbox" disabled></td><td></td></tr>
        <tr class="h"><th colspan="2">Structural</th><td><svg><use href="#fold"/></svg></td></tr>
        <tr><th><label for="st">Structural</label></th><td><input id="st" type="checkbox"></td><td></td></tr>
        <tr class="h"><th colspan="2">Dimensions</th><td><svg><use href="#fold"/></svg></td></tr>
        <tr class="dim"><th>Slope</th><td></td><td></td></tr>
        <tr class="dim"><th>Perimeter</th><td>302'&nbsp; 9 5/256"</td><td></td></tr>
        <tr class="dim"><th>Area</th><td>2578.14 SF</td><td></td></tr>
        <tr class="dim"><th>Volume</th><td>26.86 CF</td><td></td></tr>
        <tr class="dim"><th>Elevation at Top</th><td>0'&nbsp; 0"</td><td></td></tr>
        <tr class="dim"><th>Elevation at Bottom</th><td>-0'&nbsp; 0 1/8"</td><td></td></tr>
        <tr class="dim"><th>Thickness</th><td>0'&nbsp; 0 1/8"</td><td></td></tr>
        <tr class="h"><th colspan="2">Identity Data</th><td><svg><use href="#fold"/></svg></td></tr>
        <tr><th>Image</th><td></td><td></td></tr>
        <tr><th>Comments</th><td></td><td><button class="more" aria-label="Edit comments"></button></td></tr>
        <tr><th>Mark</th><td></td><td></td></tr>
        <tr class="dim"><th><label for="ha">Has Association</label></th><td><input id="ha" type="checkbox" disabled></td><td></td></tr>
        <tr class="h"><th colspan="2">Phasing</th><td><svg><use href="#fold"/></svg></td></tr>
        <tr><th>Phase Created</th><td>Existing</td><td></td></tr>
        <tr><th>Phase Demolished</th><td>None</td><td></td></tr>
        <tr class="h"><th colspan="2">IFC Parameters</th><td><svg><use href="#fold"/></svg></td></tr>
        <tr><th>Export to IFC</th><td>By Type</td><td></td></tr>
        <tr><th>Export to IFC As</th><td></td><td></td></tr>
        <tr><th>IFC Predefined Type</th><td></td><td></td></tr>
        <tr><th>IfcGUID</th><td>0B5SSPHQ95VuonHBRZLXuu</td><td></td></tr>
        </tbody>
      </table>
      <div class="pscroll"><svg viewBox="0 0 8 8"><path d="M1.500 5.500L4 3l2.500 2.500"/></svg><i></i><svg viewBox="0 0 8 8"><path d="M1.500 3L4 5.500 6.500 3"/></svg></div>
    </div>
    <footer>
      <button class="sort on" aria-label="Sort by category"><svg viewBox="0 0 12 12"><path class="k" d="M1 3h5M1 6h5M1 9h5M9 1v10M7.500 3L9 1l1.500 2M7.500 9L9 11l1.500-2"/></svg></button>
      <button class="sort" aria-label="Sort ascending"><span>A<br>Z</span><svg viewBox="0 0 5 12"><path class="k" d="M2.500 1v9M1 8l1.500 2.500L4 8"/></svg></button>
      <button class="sort" aria-label="Sort descending"><span>Z<br>A</span><svg viewBox="0 0 5 12"><path class="k" d="M2.500 1v9M1 8l1.500 2.500L4 8"/></svg></button>
      <button class="apply" disabled>Apply</button>
    </footer>
  </aside>

  <aside class="browser" aria-label="Project Browser">
    <header>Project Browser - Existing Widget Engineering Office Building.rvt</header>
    <div class="btabs">
      <button class="current" aria-label="All"><svg><use href="#home"/></svg></button><button aria-label="Views"><svg><use href="#views"/></svg></button><button aria-label="Legends"><svg><use href="#legend"/></svg></button><button aria-label="Schedules"><svg><use href="#table"/></svg></button><button aria-label="Sheets"><svg><use href="#sheet"/></svg></button><button aria-label="Families"><svg><use href="#family"/></svg></button><button aria-label="Groups"><svg><use href="#group"/></svg></button><button aria-label="Links"><svg><use href="#link"/></svg></button>
    </div>
    <label class="search"><svg viewBox="0 0 12 12"><circle class="k" cx="5" cy="5" r="3.500"/><path class="k" d="M7.500 7.500L11 11"/></svg><input type="search" placeholder="Search" aria-label="Search"></label>
    <div class="tree" role="tree">
      <div class="n"><b>−</b><svg><use href="#views"/></svg>Views (all)</div>
      <div class="n l2"><b>−</b>Floor Plans</div>
      <div class="n l3"><svg><use href="#plan"/></svg>Level 1 Existing</div>
      <div class="n l3 picked"><svg><use href="#plan"/></svg>Level 1 New</div>
      <div class="n l3"><svg><use href="#plan"/></svg>Level 2 Existing</div>
      <div class="n l3"><svg><use href="#plan"/></svg>Level 2 New</div>
      <div class="n l3 last"><svg><use href="#plan"/></svg>Site Plan</div>
      <div class="n l2"><b>−</b>Ceiling Plans</div>
      <div class="n l3"><svg><use href="#plan"/></svg>Level 1</div>
      <div class="n l3 last"><svg><use href="#plan"/></svg>Level 2</div>
      <div class="n l2"><b>−</b>3D Views</div>
      <div class="n l3"><svg><use href="#plan"/></svg>3D Cutaway - Level 1</div>
      <div class="n l3"><svg><use href="#plan"/></svg>3D Cutaway - Level 2</div>
      <div class="n l3"><svg><use href="#plan"/></svg>Camera View from Lobby</div>
      <div class="n l3 last"><svg><use href="#plan"/></svg>{3D}</div>
      <div class="n l2 end"><b>−</b>Elevations (Building Elevation)</div>
      <div class="n l3 tail"><svg><use href="#plan"/></svg>East</div>
      <div class="n l3 tail"><svg><use href="#plan"/></svg>North</div>
      <div class="n l3 tail"><svg><use href="#plan"/></svg>South</div>
      <div class="n l3 tail last"><svg><use href="#plan"/></svg>West</div>
      <div class="n"><b></b><svg><use href="#legend"/></svg>Legends</div>
      <div class="n"><b>+</b><svg><use href="#table"/></svg>Schedules/Quantities (all)</div>
      <div class="n"><b></b><svg><use href="#sheet"/></svg>Sheets (all)</div>
      <div class="n"><b>+</b><svg><use href="#family"/></svg>Families</div>
      <div class="n"><b>+</b><svg><use href="#group"/></svg>Groups</div>
      <div class="n"><b></b><svg><use href="#link"/></svg>Revit Links</div>
    </div>
  </aside>
</main>

<div class="viewbar">
  <div class="vc">
    <span class="scale">1/8" = 1'-0"</span>
    <button aria-label="Detail level"><svg><use href="#hatch"/></svg></button><button aria-label="Visual style"><svg><use href="#cube"/></svg></button><button aria-label="Sun path"><svg><use href="#sun"/></svg></button><button aria-label="Shadows"><svg><use href="#shadow"/></svg></button><button aria-label="Crop view"><svg><use href="#crop"/></svg></button><button aria-label="Show crop"><svg><use href="#cropv"/></svg></button><button aria-label="Temporary hide"><svg><use href="#glasses"/></svg></button><button aria-label="Reveal hidden"><svg><use href="#bulb"/></svg></button><button aria-label="Temporary view properties"><svg><use href="#tprops"/></svg></button><button aria-label="Analytical model"><svg><use href="#analy"/></svg></button><button aria-label="Constraints"><svg><use href="#constr"/></svg></button>
  </div>
  <div class="hscroll"><svg viewBox="0 0 8 8"><path d="M5.500 1.500L3 4l2.500 2.500"/></svg><i></i><svg viewBox="0 0 8 8"><path d="M3 1.500L5.500 4 3 6.500"/></svg></div>
  <svg class="grip" viewBox="0 0 12 12"><path fill="#888" d="M8 3h1v1H8zM5 7h1v1H5zM8 7h1v1H8zM2 10h1v1H2zM5 10h1v1H5zM8 10h1v1H8z"/></svg>
</div>

<footer class="status">
  <span class="msg">Floors : Floor : 4" Concrete Slab : R10</span>
  <div class="sets">
    <svg class="ws" viewBox="0 0 12 12"><path fill="#4a90c2" d="M1 2l3-1v7L1 7z"/><path fill="#3fa66b" d="M4 4l3-1 2 1v6l-3 1-2-1z"/><path fill="#e18a3c" d="M7 1l3 1v3L7 4z"/><path fill="#2aa0b8" d="M9 6l3 2-3 2z"/></svg>
    <svg class="chev"><use href="#down"/></svg>
    <svg class="ic" viewBox="0 0 12 12"><circle class="k lt" cx="5" cy="5" r="1.800"/><path class="k lt" d="M1 11l2-4h4l2 4zM7 4V1h5v3H9"/></svg><span>:0</span>
    <svg class="ic gap" viewBox="0 0 12 12"><path fill="#ddd" stroke="#444" d="M1 1h10v10H1zM4 1v10M5 4h5M5 6h5M5 8h5"/></svg>
    <svg class="ic gap" viewBox="0 0 12 12"><path class="k lt" d="M3 1h8v8H3zM5 3h5M5 5h5M5 7h5M1 10h5M5 8v4"/></svg>
    <label class="model"><select aria-label="Design option"><option>Main Model</option></select><svg class="chev"><use href="#down"/></svg></label>
  </div>
  <div class="selects">
    <button aria-label="Select links"><svg viewBox="0 0 12 12"><path class="k o" d="M1 1h4v3H1zM6 1h4v3H6z"/><use href="#selcur"/></svg></button>
    <button aria-label="Select underlay"><svg viewBox="0 0 12 12"><path fill="#5aa2d3" d="M1 4l5-2v6l-5 1z"/><path class="k r" d="M8 0l4 4M12 0L8 4"/><use href="#selcur"/></svg></button>
    <button aria-label="Select pinned"><svg viewBox="0 0 12 12"><path class="k" d="M2 1h5M3 1v4L1 7h7L6 5V1M4.500 7v3"/><use href="#selcur"/></svg></button>
    <button aria-label="Select by face"><svg viewBox="0 0 12 12"><path fill="#5aa2d3" d="M1 3l6-2v8l-6 2z"/><use href="#selcur"/></svg></button>
    <button aria-label="Drag on selection"><svg viewBox="0 0 12 12"><path class="k" d="M0 4h7M3.500 1v7"/><path class="k r" d="M8 0l4 4M12 0L8 4"/><use href="#selcur"/></svg></button>
    <button aria-label="Background processes"><svg viewBox="0 0 12 12"><circle cx="6" cy="6" r="4.500" fill="none" stroke="#999" stroke-width="1.500" stroke-dasharray="1.500 2"/></svg></button>
    <button aria-label="Filter"><svg><use href="#filter"/></svg></button><span>:1</span>
  </div>
</footer>
</body>
</html>
```
FILE: styles.css
```css
* { box-sizing: border-box; margin: 0; padding: 0; }
body {
  display: flex; flex-direction: column; height: 100vh; overflow: hidden;
  font: 8px/12px Lato, "Open Sans", sans-serif; color: #333; background: #dadada;
}
button, input, select { font: inherit; color: inherit; border: 0; background: none; }
button { display: inline-flex; align-items: center; justify-content: center; white-space: nowrap; }
h1, h2 { font: inherit; }
svg { display: block; flex: none; overflow: visible; width: 12px; height: 12px; }
.sprite { position: absolute; width: 0; height: 0; }
.k { stroke: #5c5c5c; stroke-width: 1; }
.k:not([fill]) { fill: none; }
.k.b { stroke: #3d86bf; }
.k.r { stroke: #d8383c; stroke-width: 1.4; }
.k.o { stroke: #e39a3e; stroke-width: 1.6; }
.k.g { stroke: #3e9b62; }
.k.lt { stroke: #999; }
.k.vl { stroke: #bbb; }
.caret { display: inline-block; flex: none; width: 6px; height: 2px; background: linear-gradient(#444, #444) center / 3px 2px no-repeat; }
.caret.tri { width: 6px; height: 4px; background: #333; clip-path: polygon(10% 10%, 90% 10%, 50% 100%); }
.caret.left { width: 4px; height: 6px; background: #333; clip-path: polygon(100% 0, 0 50%, 100% 100%); }

/* Title bar */
.titlebar { display: flex; align-items: center; height: 22px; padding-left: 4px; background: #dadada; }
.quick, .account { display: flex; align-items: center; height: 22px; flex: none; }
.quick { width: 396px; }
.logo { width: 14px; height: 14px; margin: 0 1px; background: #1759bd; color: #fff; font-weight: 700; text-align: center; line-height: 11px; border-radius: 1px; }
.qi { width: 16px; height: 16px; }
.qi.on { width: 17px; background: #e1f0f5; border: 1px solid #9ccbdc; }
.s2 { margin-left: 2px; }
.s4 { margin-left: 4px; }
.bar { border-left: 1px solid #c4c4c4; }
.titlebar h1 { flex: 1; text-align: center; line-height: 20px; white-space: nowrap; padding-right: 15px; }
.quick .tri { margin-left: 5px; }
.account { width: 238px; padding-right: 2px; }
.account .qi { margin-left: 2px; }
.user { gap: 3px; padding: 0 2px; }
.help { width: 20px; padding-left: 3px; }
.help span { width: 12px; height: 12px; line-height: 10px; border: 1px solid #444; border-radius: 50%; color: #2763b0; font-weight: 700; background: #f2f2f2; }
.win { width: 17px; height: 16px; }
.win svg { width: 10px; height: 10px; fill: none; stroke: #333; }
.win.first { margin-left: auto; }

/* Ribbon tabs */
.tabs { display: flex; height: 13px; padding-left: 3px; background: linear-gradient(#85ad4c, #85ad4c) 560px 100% / 100% 1px no-repeat #dadada; }
.tabs button { padding: 0 6px 0 7px; height: 12px; }
.tabs .file { width: 30px; padding: 0; background: #2579ac; color: #fff; margin-right: 2px; }
.tabs .current { background: #83b03e; height: 13px; margin-left: 2px; }
.tabs .mini { margin-left: 8px; gap: 2px; }
.mini svg { height: 8px; }

/* Ribbon */
.ribbon { display: flex; height: 64px; padding-left: 1px; background: #e7eee0; border-bottom: 1px solid #d8e0d0; border-left: 2px solid #cfcfcf; }
.panel { display: flex; flex-direction: column; flex: none; background: #f5f6f5; }
.panel.ctx { background: linear-gradient(#f4f8f1 52px, #e7eee0 52px); }
.panel h2 { display: flex; align-items: center; justify-content: center; gap: 4px; line-height: 10px; }
.w38 { width: 38px; } .w42 { width: 42px; } .w55 { width: 55px; } .w91 { width: 91px; } .w39 { width: 39px; }
.w158 { width: 158px; } .w40 { width: 40px; } .w44 { width: 44px; } .w50 { width: 50px; } .w46 { width: 46px; } .w224 { width: 224px; }
.tools { display: flex; height: 52px; padding: 3px 2px 1px; justify-content: center; }
.big { flex-direction: column; justify-content: flex-start; line-height: 10px; padding-top: 1px; height: 48px; gap: 2px; border: 1px solid transparent; }
.big svg { width: 22px; height: 22px; }
.big.sel, .mid.sel { background: #e0f1f6; border: 1px solid #96ccde; }
.w38 .big { width: 30px; }
.w39 .big { width: 33px; }
.off { color: #b4b4b4; opacity: .75; }
.stack { flex-direction: column; align-items: center; padding-top: 2px; justify-content: flex-start; }
.mid { width: 26px; height: 24px; }
.mid svg { width: 22px; height: 22px; }
.sm { width: 14px; height: 16px; }
.col { display: flex; flex-direction: column; }
.clip { justify-content: space-between; padding-left: 7px; padding-right: 4px; }
.clip .big svg { width: 20px; height: 22px; }
.row { gap: 4px; height: 16px; justify-content: flex-start; }
.row .caret { margin-left: auto; }
.geo { display: grid; grid-template-columns: 44px 16px 17px 8px; grid-auto-rows: 16px; align-items: center; justify-content: start; padding-left: 3px; }
.geo .row { gap: 3px; }
.geo .sm { justify-self: end; }
.mod { justify-content: flex-start; padding-left: 1px; }
.g4 { display: grid; grid-template-columns: repeat(4, 26px); grid-auto-rows: 24px; }
.g4 svg, .pair svg, .quad svg { width: 20px; height: 20px; }
.g3 { display: grid; grid-template-columns: repeat(3, 17px); grid-auto-rows: 16px; justify-items: center; }
.view { display: grid; grid-template-columns: 18px 6px 14px; grid-auto-rows: 16px; align-items: center; padding-left: 1px; }
.pair { display: grid; grid-template-columns: 22px 10px; grid-auto-rows: 24px; align-items: center; justify-content: center; }
.quad { display: grid; grid-template-columns: 25px 25px; grid-auto-rows: 24px; padding-left: 0; padding-right: 0; }
.shape { justify-content: flex-start; padding-left: 1px; }
.shape .col { margin-left: 4px; align-items: flex-start; }
.shape .wide { width: 68px; }
.shape .top { align-self: flex-start; }
.shape .tail { margin-left: auto; padding-right: 2px; padding-left: 2px; }

.options { height: 19px; padding: 0 6px; line-height: 20px; background: #e7eee0; color: #555; border-left: 2px solid #cfcfcf; }

/* View tabs */
.doctabs { display: flex; height: 14px; background: #cacaca; padding-left: 1px; border-left: 2px solid #cfcfcf; color: #555; }
.doctabs button { width: 88px; justify-content: flex-start; gap: 4px; padding-left: 3px; }
.doctabs .current { background: #fff; font-weight: 700; color: #222; width: 85px; }
.doctabs .current span { margin-left: auto; padding-right: 3px; font-weight: 400; }
.doctabs .end { margin: 5px 4px 0 auto; opacity: .6; }

/* Drawing area */
.work { position: relative; flex: 1; min-height: 0; overflow: hidden; background: #fff; border-left: 2px solid #d3d1d4; }
.plan { position: absolute; inset: 0; width: 100%; height: 100%; overflow: hidden; }
.d { fill: none; stroke: #999; stroke-width: .7; }
.dk { stroke: #777; }
.wf { fill: #fff; }
.w { stroke: #222; }
.w:not([fill]) { fill: none; }
.gw { fill: #c4c4c4; stroke: #333; stroke-width: .9; }
.e { fill: none; stroke: #213e82; }
.stair { fill: none; stroke: #667b8e; stroke-width: .9; }
.bubble circle { fill: #fff; stroke: #333; }
.bubble text { font: 18px "Liberation Sans", sans-serif; text-anchor: middle; fill: #111; }

.accel { position: absolute; top: 13px; right: 40px; display: flex; align-items: flex-start; gap: 4px; color: #777; line-height: 9px; }
.accel input { appearance: none; width: 23px; height: 11px; margin-top: 4px; border-radius: 6px; background: radial-gradient(circle at 6px 50%, #fff 4px, transparent 5px) #999; border: 1px solid #888; }
.accel em { display: block; }
.navbar { position: absolute; top: 1px; right: 13px; width: 24px; height: 120px; display: flex; flex-direction: column; align-items: center; background: #f1f2f2; border: 1px solid #c6c9ca; border-radius: 3px; }
.navbar .dot { width: 4px; height: 4px; margin: 2px 3px 5px auto; border: 1px solid #999; border-radius: 50%; }
.navbar button { position: relative; height: 20px; }
.navbar svg { width: 16px; height: 16px; }
.navbar small { position: absolute; right: -2px; bottom: 0; font-size: 7px; line-height: 7px; color: #888; }
.navbar hr { width: 18px; border: 0; border-top: 1px solid #ccc; margin: 3px 0 1px; }
.navbar .caret { opacity: .6; }
.vscroll { position: absolute; top: 0; right: 0; bottom: 0; width: 12px; display: flex; flex-direction: column; justify-content: space-between; background: #ececec; }
.vscroll button { width: 12px; height: 12px; background: #f3f3f3; }
.vscroll svg, .pscroll svg, .hscroll svg, .chev { width: 8px; height: 8px; fill: none; stroke: #777; }

/* Properties palette */
.props { position: absolute; left: 10px; top: 49px; width: 248px; background: #f0f0f0; border: 1px solid #c9c9c9; box-shadow: 0 1px 5px rgba(0, 0, 0, .45); color: #333; }
.props > header { display: flex; justify-content: space-between; height: 12px; line-height: 12px; padding: 0 2px; background: #dcdcdc; }
.props > header button { width: 8px; }
.type { display: flex; width: 241px; height: 47px; margin: 1px 2px 0; padding: 0 4px 0 1px; justify-content: flex-start; gap: 3px; text-align: left; line-height: 11px; border: 1px solid #d2d2d2; color: #555; background: #f3f3f3; }
.thumb { width: 43px; height: 43px; background: linear-gradient(#666, #666) center / 100% 1px no-repeat #fff; border: 1px solid #e5e5e5; }
.type .caret { margin-left: auto; }
.pick { display: flex; height: 20px; padding: 1px 7px 3px 2px; justify-content: space-between; }
.pick label { display: flex; align-items: center; width: 188px; border-bottom: 1px solid #c4c4c4; }
.pick select { flex: 1; appearance: none; padding-left: 2px; color: #555; }
.pick button { gap: 3px; }
.sheet { display: flex; margin: 0 3px 0 2px; height: 346px; background: #fff; }
.sheet table { border-collapse: separate; border-spacing: 0; table-layout: fixed; width: 230px; height: 336px; }
.c1 { width: 110px; } .c2 { width: 112px; } .c3 { width: 8px; }
.sheet th, .sheet td { height: 12px; line-height: 11px; font-weight: 400; text-align: left; border-bottom: 1px solid #ececec; white-space: nowrap; color: #222; }
.sheet th { padding-left: 5px; }
.sheet td { padding-left: 1px; border-left: 1px solid #e8e8e8; }
.sheet td:last-child { padding: 0; }
.sheet td svg { width: 8px; height: 8px; margin-left: -2px; }
.sheet .dim th, .sheet .dim td { color: #888; }
.sheet .h th, .sheet .h td { background: #e4e4e4; border-color: #e4e4e4; }
.sheet .h th { font-weight: 700; padding-left: 1px; }
.sheet table input[type="checkbox"] { appearance: none; display: block; width: 8px; height: 8px; margin-left: 1px; border: 1px solid #777; background: #fff; }
.sheet table input[type="checkbox"]:checked { background: #666; }
.sheet table input:checked::after { content: ""; display: block; width: 2px; height: 4px; margin: 0 0 0 2px; border: solid #fff; border-width: 0 1px 1px 0; transform: rotate(45deg); }
.sheet table input:disabled { border-color: #ccc; }
.sheet .tx { display: block; width: 111px; height: 11px; border: 1px solid #222; margin-left: -1px; }
.more { display: block; width: 6px; height: 10px; border: 1px solid #bbb; }
.pscroll { width: 12px; display: flex; flex-direction: column; align-items: center; background: #efefef; }
.pscroll svg { margin: 2px 0 1px; }
.pscroll i { width: 5px; flex: 1; max-height: 306px; margin-bottom: auto; background: #8b8b8b; border-radius: 3px; }
.props footer { display: flex; align-items: center; height: 18px; padding: 0 4px 0 3px; gap: 3px; }
.sort { width: 14px; height: 14px; }
.sort.on { background: #8fcbe4; }
.sort span { font-size: 6px; line-height: 6px; }
.sort svg:last-child:not(:first-child) { width: 5px; }
.apply { width: 47px; height: 12px; margin-left: auto; border: 1px solid #dcdcdc; color: #aaa; }

/* Project browser */
.browser { position: absolute; right: 0; top: 76px; width: 232px; height: 458px; background: #fff; border: 1px solid #bbb; border-right: 0; box-shadow: -1px 1px 5px rgba(0, 0, 0, .4); color: #333; }
.browser > header { height: 12px; line-height: 12px; padding-left: 2px; background: #dcdcdc; white-space: nowrap; overflow: hidden; }
.btabs { display: flex; height: 16px; background: #cbcbcb; }
.btabs button { width: 16px; height: 16px; }
.btabs .current { background: #fff; width: 18px; padding-left: 2px; }
.btabs svg, .tree svg { width: 11px; height: 11px; }
.search { display: flex; align-items: center; gap: 5px; height: 17px; margin: 5px 0 5px 7px; padding-left: 5px; border: 1px solid #ddd; border-right: 0; }
.search input { flex: 1; min-width: 0; outline: 0; }
.search ::placeholder { color: #999; }
.tree { display: flex; flex-direction: column; height: 347px; }
.n { position: relative; flex: 1; display: flex; align-items: center; gap: 2px; padding-left: 4px; white-space: nowrap; }
.n b { width: 8px; text-align: center; font-weight: 400; font-size: 10px; line-height: 10px; }
.n > svg { margin: 0 0 0 2px; }
.n.l2 { padding-left: 15px; gap: 4px; }
.n.l3 { padding-left: 36px; gap: 2px; }
.n.picked { background: #f1f1f1; font-weight: 700; color: #111; }
.n.l2::before, .n.l3::before { content: ""; position: absolute; left: 7px; top: 0; bottom: 0; border-left: 1px dashed #bbb; }
.n.l2::before { width: 7px; background: linear-gradient(#ccc, #ccc) 0 50% / 5px 1px no-repeat; }
.n.end::before { bottom: 50%; }
.n.tail::before { display: none; }
.n.l3::after { content: ""; position: absolute; left: 18px; top: 0; height: 50%; width: 16px; border-left: 1px dashed #bbb; border-bottom: 1px dashed #bbb; }
.n.l3:not(.last) { background-image: linear-gradient(#ccc, #ccc); background-position: 18px 100%; background-size: 1px 50%; background-repeat: no-repeat; }

/* View control bar */
.viewbar { display: flex; align-items: center; height: 12px; background: #e9e9e9; border-left: 2px solid #d3d1d4; }
.vc { display: flex; align-items: center; height: 12px; background: #fff; padding-left: 9px; }
.scale { width: 46px; }
.vc button { width: 17px; height: 12px; }
.vc svg { width: 10px; height: 10px; }
.hscroll { flex: 1; display: flex; align-items: center; justify-content: space-between; padding: 0 4px 0 3px; }
.hscroll i { width: 12px; height: 5px; border-radius: 3px; background: #8d8d8d; }
.grip { width: 12px; height: 12px; background: #f2f2f2; }

/* Status bar */
.status { display: flex; align-items: center; height: 19px; padding: 0 62px 0 4px; background: #f3f3f3; border-bottom: 2px solid #dcdcdc; color: #555; }
.msg { width: 576px; }
.sets { display: flex; align-items: center; flex: 1; color: #888; }
.ws { margin-left: 1px; }
.sets .chev { margin-left: 133px; }
.ic { margin-left: 8px; }
.ic.gap { margin-left: 15px; width: 11px; height: 11px; }
.ic.gap + .gap { margin-left: 7px; }
.sets span { width: 8px; margin-left: 1px; }
.sets .model { display: flex; align-items: center; margin-left: 5px; }
.model select { appearance: none; width: 126px; }
.sets .model .chev { margin-left: 0; }
.selects { display: flex; align-items: center; }
.selects button { width: 17px; }
.selects svg { width: 11px; height: 11px; }
.selects span { margin-left: -1px; width: 8px; }
```
